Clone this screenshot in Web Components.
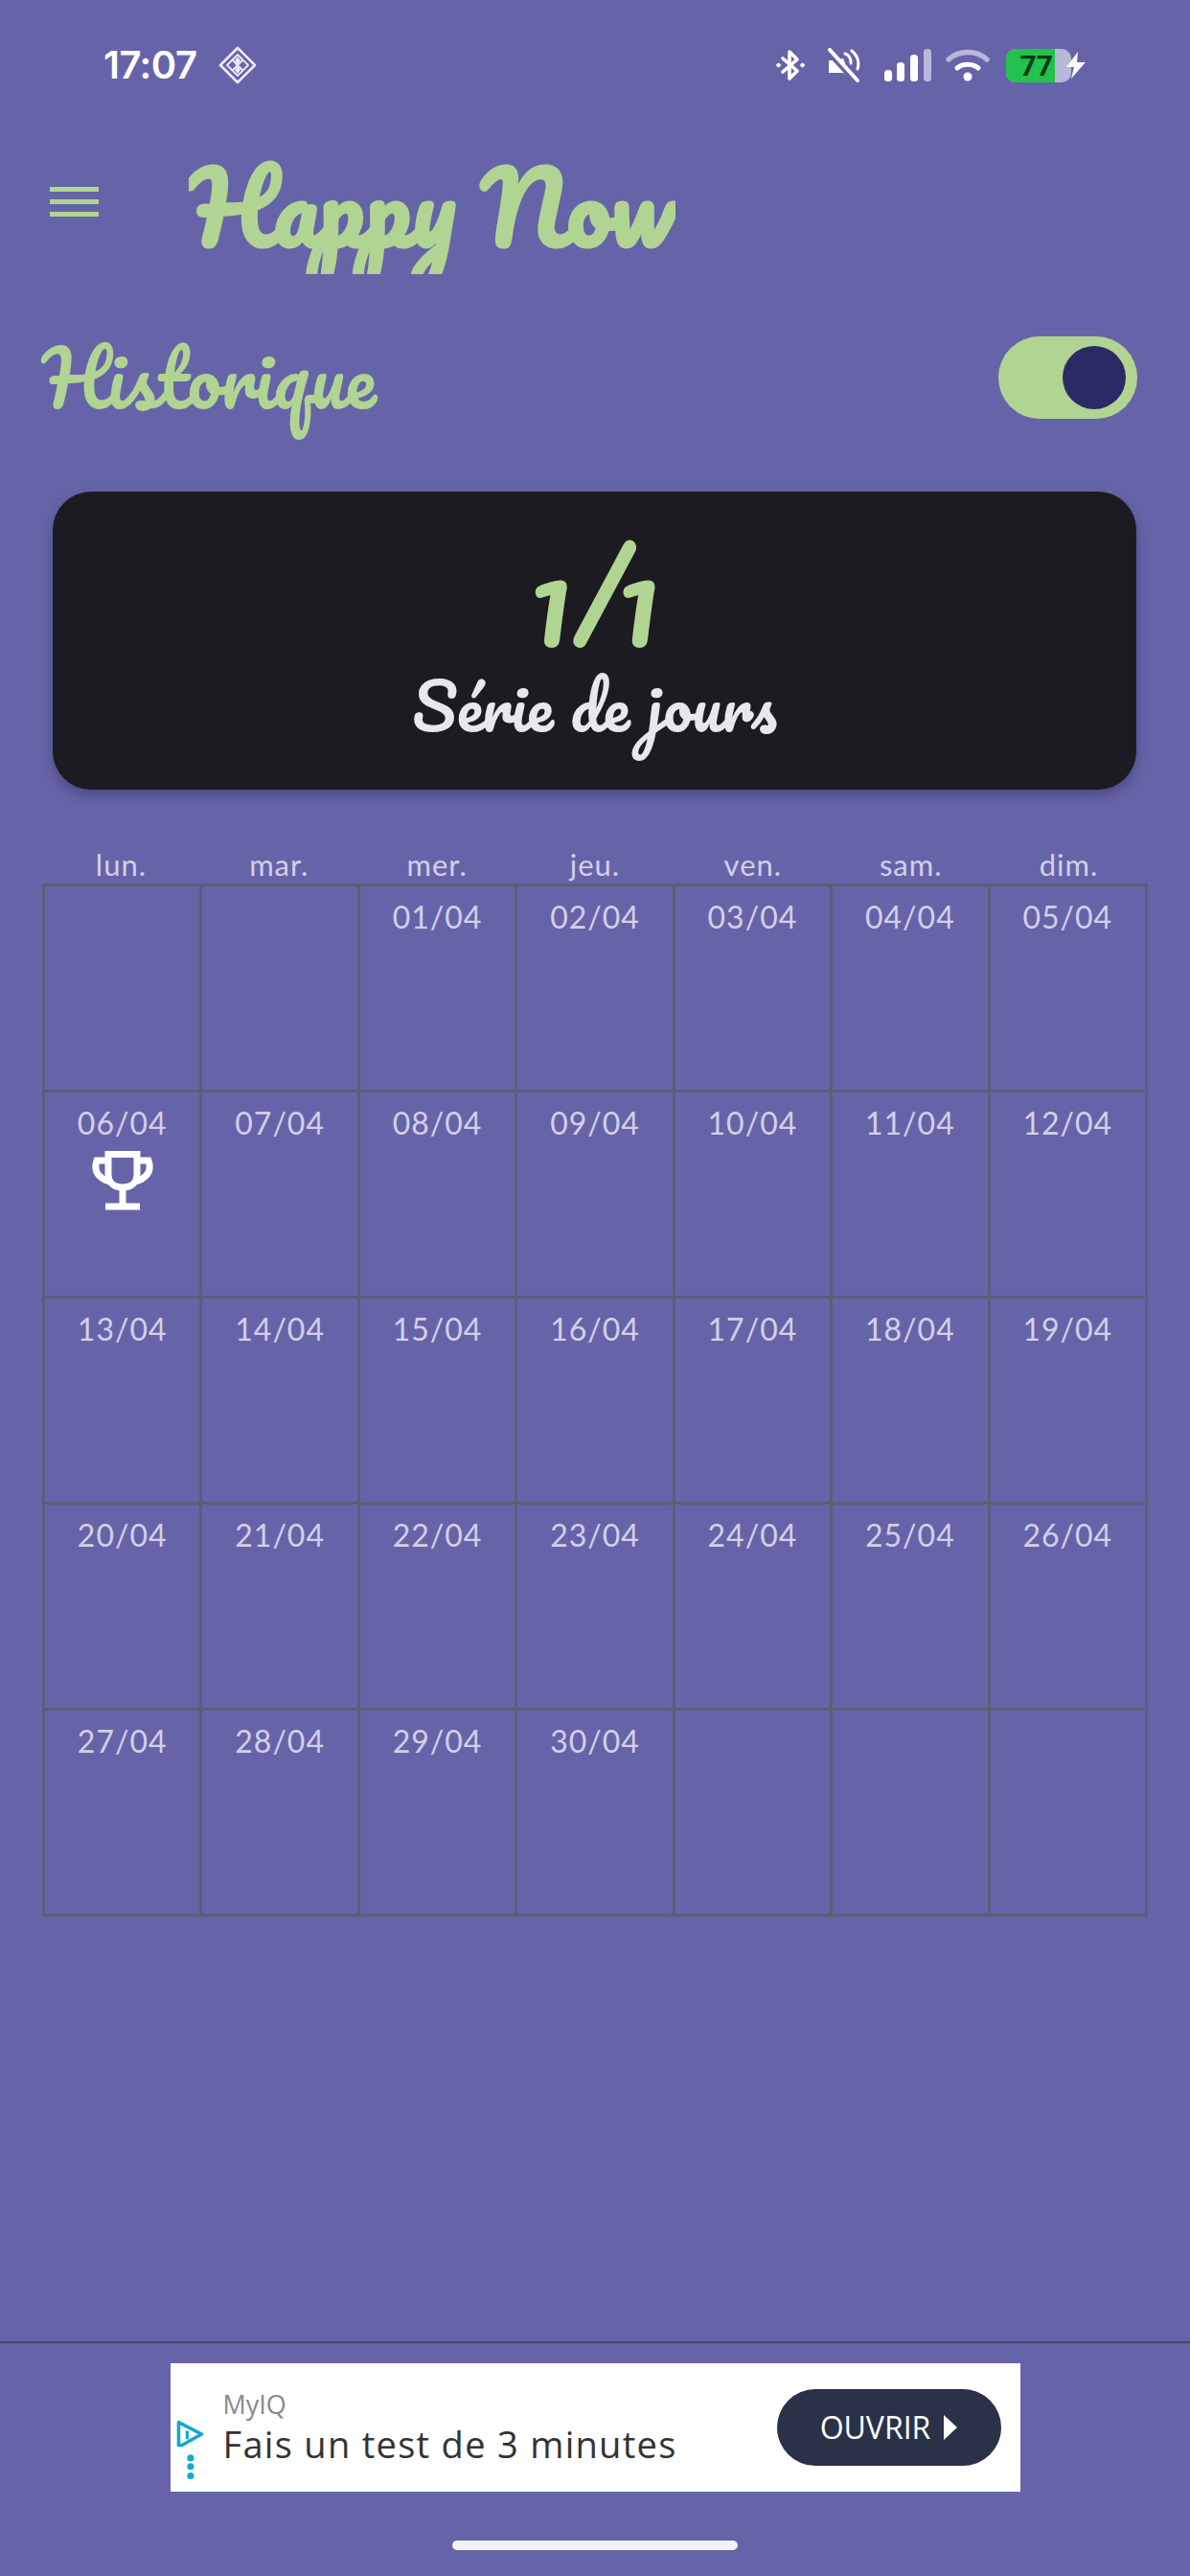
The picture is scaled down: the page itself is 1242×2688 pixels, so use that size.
<!DOCTYPE html>
<html lang="fr">
<head>
<meta charset="UTF-8">
<title>Happy Now</title>
<style>
  html, body { margin: 0; background: #6664a8; }
  body { width: 1242px; height: 2688px; overflow: hidden; font-family: Lato, sans-serif; }
  happy-app { height: 100%; }
</style>
</head>
<body>
<happy-app>
  <status-bar></status-bar>
  <app-header>Happy Now</app-header>
  <page-title>Historique</page-title>
  <streak-card value="1/1">Série de jours</streak-card>
  <month-calendar></month-calendar>
  <ad-banner></ad-banner>
</happy-app>

<script>
  const SCRIPT_FONT = '"Pacifico", "Dancing Script", cursive';

  class HappyApp extends HTMLElement {
    constructor() {
      super();
      this.attachShadow({ mode: 'open' });
      this.shadowRoot.innerHTML = `
        <style>
          :host { display: flex; flex-direction: column; width: 1242px; }
          ::slotted(ad-banner) { margin-top: auto; }
        </style>
        <slot></slot>
      `;
    }
  }

  class StatusBar extends HTMLElement {
    constructor() {
      super();
      this.attachShadow({ mode: 'open' });
      this.shadowRoot.innerHTML = `
        <style>
          :host { display: flex; align-items: center; height: 44px; padding: 46px 0 0 108px; color: #fff; }
          .time { font: 600 40px/44px Inter, sans-serif; letter-spacing: -.5px; width: 120px; }
          .right { margin-left: auto; display: flex; align-items: center; margin-right: 108px; }
          svg { display: block; }
          .batt { width: 68px; height: 35px; margin-left: 17px; border-radius: 10px; overflow: hidden; display: flex; background: #b9b8da; }
          .batt b { width: 51px; background: #22c24c; color: #053a14; font: 700 30px/35px Roboto, sans-serif; text-align: right; padding-right: 2px; box-sizing: border-box; }
        </style>
        <span class="time">17:07</span>
        <svg width="40" height="40" viewBox="0 0 40 40" fill="none" stroke="#ecebf7" stroke-width="2.6" stroke-linejoin="round">
          <path d="M20 2 38 20 20 38 2 20Z"/>
          <path stroke-width="1.8" d="M20 9 31 20 20 31 9 20ZM14.5 14.5 25.5 25.5M25.5 14.5 14.5 25.5"/>
          <path fill="#ecebf7" stroke="none" d="M20 11 23 15 20 19 17 15ZM20 21 23 25 20 29 17 25Z"/>
        </svg>
        <div class="right">
          <svg width="30" height="34" viewBox="0 0 30 34" fill="none" stroke="#fff" stroke-width="3.6" stroke-linejoin="round" stroke-linecap="round">
            <path d="M7 10 22 23 14 31V3l8 8L7 24"/>
            <circle cx="2.5" cy="17" r="1.8" fill="#fff" stroke-width="1"/><circle cx="27.5" cy="17" r="1.8" fill="#fff" stroke-width="1"/>
          </svg>
          <svg style="margin-left:23px" width="35" height="36" viewBox="0 0 35 36" fill="none" stroke="#fff" stroke-linecap="round">
            <path fill="#fff" stroke="none" d="M2 13h7l8-2 5 12v6l-5-3H2Z"/>
            <path stroke-width="3" d="M19 6c4 1 6 5 6 10M26 3c6 5 8 12 6 19"/>
            <path stroke="#6664a8" stroke-width="7" d="M0 2 31 35"/>
            <path stroke-width="4" d="M3 2 32 34"/>
          </svg>
          <svg style="margin-left:25px" width="49" height="34" viewBox="0 0 49 34" fill="#fff">
            <rect x="0" y="22" width="8" height="12" rx="3.5"/>
            <rect x="13" y="14" width="8" height="20" rx="3.5"/>
            <rect x="27" y="6" width="8" height="28" rx="3.5"/>
            <rect x="41" y="0" width="8" height="34" rx="3.5" fill="#b9b8da"/>
          </svg>
          <svg style="margin-left:15px" width="46" height="34" viewBox="0 0 46 34" fill="none" stroke-linecap="round">
            <path stroke="#b9b8da" stroke-width="5.5" d="M3 11C14 1 32 1 43 11"/>
            <path stroke="#fff" stroke-width="5" d="M12 20c6-5 16-5 22 0"/>
            <circle cx="23" cy="29" r="4.5" fill="#fff"/>
          </svg>
          <div class="batt"><b>77</b></div>
          <svg style="margin-left:-6px" width="22" height="30" viewBox="0 0 22 30" fill="#fff"><path d="M13 1 1 17h8l-3 12L21 12h-9Z"/></svg>
        </div>
      `;
    }
  }

  class AppHeader extends HTMLElement {
    constructor() {
      super();
      this.attachShadow({ mode: 'open' });
      this.shadowRoot.innerHTML = `
        <style>
          :host { display: flex; align-items: flex-start; height: 132px; padding: 64px 0 0 52px; }
          .burger { display: flex; flex-direction: column; gap: 8px; width: 51px; margin-top: 41px; }
          .burger i { display: block; height: 5px; background: #b2d492; }
          .name { margin-left: 94px; height: 132px; overflow: hidden; font: 700 101px/122px ${SCRIPT_FONT}; color: #b2d492; white-space: nowrap; }
        </style>
        <div class="burger"><i></i><i></i><i></i></div>
        <div class="name"><slot></slot></div>
      `;
    }
  }

  class PageTitle extends HTMLElement {
    constructor() {
      super();
      this.attachShadow({ mode: 'open' });
      this.shadowRoot.innerHTML = `
        <style>
          :host { display: flex; align-items: center; justify-content: space-between; height: 104px; margin-top: 56px; padding: 0 55px 0 44px; }
          .title { font: 400 78px/104px ${SCRIPT_FONT}; color: #b2d492; }
          .toggle { width: 145px; height: 86px; border-radius: 43px; background: #b2d492; display: flex; align-items: center; justify-content: flex-end; padding-right: 12px; box-sizing: border-box; }
          .toggle i { width: 66px; height: 66px; border-radius: 50%; background: #2b2a66; }
        </style>
        <span class="title"><slot></slot></span>
        <div class="toggle"><i></i></div>
      `;
    }
  }

  class StreakCard extends HTMLElement {
    constructor() {
      super();
      this.attachShadow({ mode: 'open' });
      this.shadowRoot.innerHTML = `
        <style>
          :host { display: flex; flex-direction: column; align-items: center; width: 1131px; height: 311px; margin: 67px 0 0 55px; background: #1c1b21; border-radius: 40px; box-shadow: 0 6px 12px rgba(30,28,70,.35); box-sizing: border-box; padding-top: 46px; }
          .value { font: 400 120px/130px ${SCRIPT_FONT}; color: #b2d492; }
          .label { font: 400 67px/90px ${SCRIPT_FONT}; color: #e9e7ee; margin-top: 2px; }
        </style>
        <span class="value">${this.getAttribute('value')}</span>
        <span class="label"><slot></slot></span>
      `;
    }
  }

  class CalDay extends HTMLElement {
    constructor() {
      super();
      this.attachShadow({ mode: 'open' });
      this.shadowRoot.innerHTML = `
        <style>
          :host { display: flex; flex-direction: column; align-items: center; box-sizing: border-box; border-right: 3px solid #5d5d78; border-bottom: 3px solid #5d5d78; padding-top: 13px; font: 400 32px/38px Lato, sans-serif; letter-spacing: 1px; color: #d2d0e8; }
          svg { margin-top: 10px; display: block; }
        </style>
        <span><slot></slot></span>
        ${this.hasAttribute('trophy') ? `
        <svg width="64" height="62" viewBox="0 0 64 62" fill="none" stroke="#fff" stroke-width="7">
          <path d="M17 3.5h30V24c0 9-6 14-15 14s-15-5-15-14Z"/>
          <path d="M17 10H5C1 22 8 29 19 32M47 10h12c4 12-3 19-14 22"/>
          <path d="M32 38v20M14 58h36"/>
        </svg>` : ''}
      `;
    }
  }

  class MonthCalendar extends HTMLElement {
    constructor() {
      super();
      this.attachShadow({ mode: 'open' });
      const head = ['lun.', 'mar.', 'mer.', 'jeu.', 'ven.', 'sam.', 'dim.'].map(d => `<span>${d}</span>`).join('');
      let cells = '';
      for (let n = -1; n < 34; n++) {
        const label = n >= 1 && n <= 30 ? String(n).padStart(2, '0') + '/04' : '';
        cells += `<cal-day${n === 6 ? ' trophy' : ''}>${label}</cal-day>`;
      }
      this.shadowRoot.innerHTML = `
        <style>
          :host { display: block; margin: 56px 0 0 44px; width: 1154px; }
          .head, .grid { display: grid; grid-template-columns: repeat(7, 1fr); }
          .head { text-align: center; font: 400 31px/44px Lato, sans-serif; letter-spacing: 1px; color: #d2d0e8; height: 42px; }
          .grid { grid-auto-rows: 215px; border-top: 3px solid #5d5d78; border-left: 3px solid #5d5d78; }
        </style>
        <div class="head">${head}</div>
        <div class="grid">${cells}</div>
      `;
    }
  }

  class AdBanner extends HTMLElement {
    constructor() {
      super();
      this.attachShadow({ mode: 'open' });
      this.shadowRoot.innerHTML = `
        <style>
          :host { display: flex; flex-direction: column; align-items: center; border-top: 2px solid #4a4868; height: 245px; box-sizing: border-box; padding-top: 21px; }
          .ad { width: 887px; height: 134px; background: #fff; display: flex; align-items: center; box-sizing: border-box; position: relative; padding: 0 20px 0 55px; }
          .ad svg.mark { position: absolute; left: 4px; top: 53px; }
          .txt { display: flex; flex-direction: column; font-family: "Open Sans", sans-serif; flex: 1; }
          .brand { font-size: 27px; line-height: 34px; color: #8a8a8a; }
          .line { font-size: 38px; line-height: 48px; color: #333; letter-spacing: 1.3px; }
          .btn { width: 234px; height: 80px; border-radius: 40px; background: #2b3147; color: #fff; display: flex; align-items: center; justify-content: center; gap: 14px; font: 400 32px/80px "Open Sans", sans-serif; }
          .btn i { border-left: 14px solid #fff; border-top: 13px solid transparent; border-bottom: 13px solid transparent; }
          .home { width: 298px; height: 10px; border-radius: 5px; background: #f3f2f7; margin-top: 51px; }
        </style>
        <div class="ad">
          <svg class="mark" width="32" height="74" viewBox="0 0 36 74" fill="none">
            <path d="M5 5 32 19 9 32H5Z" stroke="#12a9cc" stroke-width="4" stroke-linejoin="round"/>
            <path d="M15 15v10" stroke="#12a9cc" stroke-width="3.5"/>
            <circle cx="19" cy="47" r="4" fill="#12a9cc"/><circle cx="19" cy="57" r="4" fill="#12a9cc"/><circle cx="19" cy="68" r="4" fill="#12a9cc"/>
          </svg>
          <div class="txt"><span class="brand">MyIQ</span><span class="line">Fais un test de 3 minutes</span></div>
          <div class="btn">OUVRIR<i></i></div>
        </div>
        <div class="home"></div>
      `;
    }
  }

  // cal-day first so that the calendar finds it upgraded
  customElements.define('cal-day', CalDay);
  customElements.define('happy-app', HappyApp);
  customElements.define('status-bar', StatusBar);
  customElements.define('app-header', AppHeader);
  customElements.define('page-title', PageTitle);
  customElements.define('streak-card', StreakCard);
  customElements.define('month-calendar', MonthCalendar);
  customElements.define('ad-banner', AdBanner);
</script>
</body>
</html>
